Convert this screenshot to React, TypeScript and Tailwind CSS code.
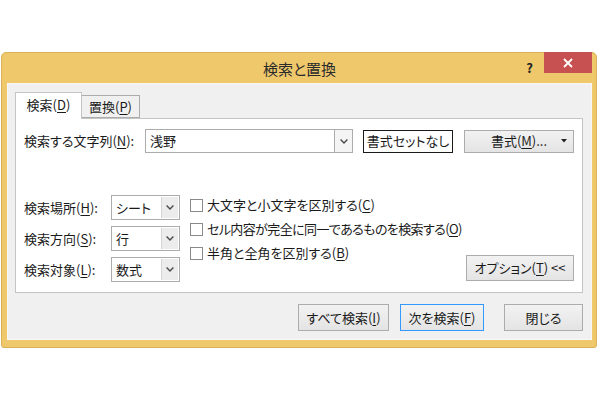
import { ReactNode } from "react";

const font = "font-['Noto_Sans_CJK_JP','Noto_Sans',sans-serif] [font-feature-settings:'palt']";

function Chevron() {
  return (
    <svg width="8" height="5" viewBox="0 0 8 5">
      <path d="M0.6 0.6 L4 4 L7.4 0.6" stroke="#4a4a4a" strokeWidth="1.4" fill="none" />
    </svg>
  );
}

function U({ children }: { children: ReactNode }) {
  return <span className="underline underline-offset-2">{children}</span>;
}

function Combo({ value }: { value: string }) {
  return (
    <div className="flex h-[25px] w-[69px] border border-[#acacac] bg-white">
      <span className="flex-1 pl-[4px] leading-[23px]">{value}</span>
      <div className="my-[1px] mr-[1px] flex w-[17px] items-center justify-center border-l border-[#d4d4d4] bg-[#ececec]">
        <Chevron />
      </div>
    </div>
  );
}

function Check({ children, tight = false }: { children: ReactNode; tight?: boolean }) {
  return (
    <div className="flex h-[24px] items-center gap-[4px] whitespace-nowrap">
      <div className="h-[13px] w-[13px] shrink-0 border border-[#8a8a8a] bg-white" />
      <span className={tight ? "tracking-[-0.6px]" : ""}>{children}</span>
    </div>
  );
}

function Btn({
  children,
  w,
  primary = false,
}: {
  children: ReactNode;
  w: string;
  primary?: boolean;
}) {
  return (
    <div
      className={
        "flex h-[27px] items-center justify-center whitespace-nowrap border bg-gradient-to-b from-[#f2f2f2] to-[#e4e4e4] " +
        w +
        (primary ? " border-[#3399ff]" : " border-[#acacac]")
      }
    >
      {children}
    </div>
  );
}

export default function App() {
  return (
    <div className={"h-[400px] w-[600px] bg-white pt-[52px] pl-[1px] text-[13px] text-[#1a1a1a] " + font}>
      {/* window frame */}
      <div className="flex h-[296px] w-[596px] flex-col rounded-t-[5px] rounded-b-[3px] border border-[#d9b258] bg-[#f0c86c] pr-[4px] pb-[7px] pl-[5px]">
        {/* title bar */}
        <div className="relative flex h-[30px] shrink-0 items-center justify-center">
          <span className="pt-[2px] text-[15px] text-[#2b2b2b]">検索と置換</span>
          <span className="absolute top-[5px] right-[59px] text-[13px] font-bold text-[#222]">?</span>
          <div className="absolute top-[-1px] right-[0px] flex h-[21px] w-[48px] items-center justify-center bg-[#c75050]">
            <svg width="10" height="10" viewBox="0 0 10 10">
              <path d="M1 1 L9 9 M9 1 L1 9" stroke="#fff" strokeWidth="1.8" />
            </svg>
          </div>
        </div>

        {/* client area */}
        <div className="flex flex-1 flex-col border border-[#f7f7f7] bg-[#f0f0f0] pt-[8px] pr-[8px] pl-[7px]">
          {/* tabs */}
          <div className="relative z-10 flex items-end">
            <div className="-mb-px flex h-[27px] w-[67px] items-center justify-center border border-b-0 border-[#c4c4c4] bg-white pb-[2px]">
              検索(<U>D</U>)
            </div>
            <div className="flex h-[23px] w-[58px] items-center justify-center border border-l-0 border-[#acacac] bg-[#f0f0f0]">
              置換(<U>P</U>)
            </div>
          </div>

          {/* tab panel */}
          <div className="flex h-[175px] flex-col border border-[#c4c4c4] bg-white px-[8px] pt-[10px]">
            <div className="flex h-[24px] items-center whitespace-nowrap">
              <span className="w-[121px]">
                検索する文字列(<U>N</U>):
              </span>
              <div className="flex h-[24px] w-[208px] border border-[#acacac] bg-white">
                <span className="flex-1 pl-[4px] leading-[22px]">浅野</span>
                <div className="flex w-[18px] items-center justify-center border-l border-[#acacac] bg-[#f4f4f4]">
                  <Chevron />
                </div>
              </div>
              <div className="ml-[10px] flex h-[23px] w-[90px] items-center justify-center border border-[#1a1a1a] bg-white">
                書式セットなし
              </div>
              <div className="relative ml-[11px] flex h-[23px] w-[110px] items-center justify-center border border-[#acacac] bg-gradient-to-b from-[#f2f2f2] to-[#e4e4e4]">
                書式(<U>M</U>)...
                <svg className="absolute right-[6px]" width="6" height="4" viewBox="0 0 6 4">
                  <path d="M0 0 L6 0 L3 3.5 Z" fill="#222" />
                </svg>
              </div>
            </div>

            <div className="mt-[40px] flex whitespace-nowrap">
              <div className="mt-[2px] flex flex-col gap-[6px]">
                <div className="flex items-center">
                  <span className="w-[87px]">
                    検索場所(<U>H</U>):
                  </span>
                  <Combo value="シート" />
                </div>
                <div className="flex items-center">
                  <span className="w-[87px]">
                    検索方向(<U>S</U>):
                  </span>
                  <Combo value="行" />
                </div>
                <div className="flex items-center">
                  <span className="w-[87px]">
                    検索対象(<U>L</U>):
                  </span>
                  <Combo value="数式" />
                </div>
              </div>

              <div className="ml-[10px] flex w-[260px] shrink-0 flex-col">
                <Check>
                  大文字と小文字を区別する(<U>C</U>)
                </Check>
                <Check tight>
                  セル内容が完全に同一であるものを検索する(<U>O</U>)
                </Check>
                <Check>
                  半角と全角を区別する(<U>B</U>)
                </Check>
              </div>

              <div className="ml-auto flex items-end pb-[1px]">
                <div className="flex h-[26px] w-[108px] items-center justify-center border border-[#acacac] bg-gradient-to-b from-[#f2f2f2] to-[#e4e4e4]">
                  オプション(<U>T</U>) &lt;&lt;
                </div>
              </div>
            </div>
          </div>

          {/* bottom buttons */}
          <div className="mt-[11px] flex justify-end">
            <Btn w="w-[91px]">
              すべて検索(<U>I</U>)
            </Btn>
            <div className="ml-[11px]">
              <Btn w="w-[84px]" primary>
                次を検索(<U>F</U>)
              </Btn>
            </div>
            <div className="ml-[20px]">
              <Btn w="w-[79px]">閉じる</Btn>
            </div>
          </div>
        </div>
      </div>
    </div>
  );
}
